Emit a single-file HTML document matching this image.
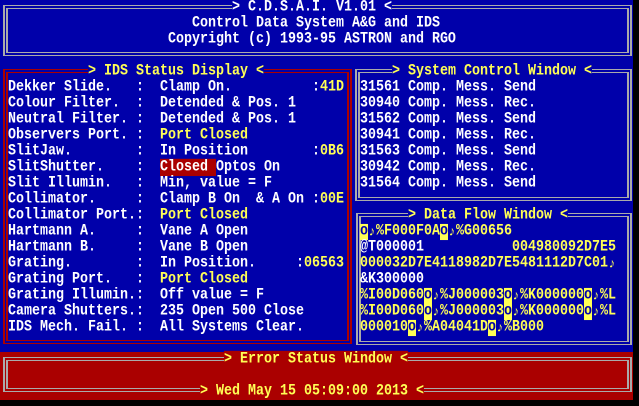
<!DOCTYPE html>
<html><head><meta charset="utf-8"><style>
html,body{margin:0;padding:0;background:#000;width:639px;height:406px;overflow:hidden}
#blue{position:absolute;left:0;top:0;width:633px;height:352px;background:#0000aa}
#red{position:absolute;left:0;top:352px;width:633px;height:48px;background:#aa0000}
#blk{position:absolute;left:0;top:400px;width:639px;height:6px;background:#000;z-index:5}
.box{position:absolute;box-sizing:border-box;border-style:double;border-width:4px 5px;border-color:#aaaaaa}
.r{position:absolute;height:16px;line-height:16px;white-space:pre;font-family:"Liberation Mono","DejaVu Sans Mono",monospace;font-weight:bold;font-size:13.33px;color:#fff;transform:scaleY(1.15);transform-origin:0 50%}
.y{color:#ffff55}
.bb{background:#0000aa}
.rb{background:#aa0000}
.cr{background:#aa0000;color:#fff}
.lf{background:#ffff55;color:#0000aa;display:inline-block;width:8px;height:14px;margin-top:1px;line-height:14px;text-align:center;vertical-align:top}
.n{display:inline-block;width:8px;height:16px;line-height:16px;overflow:hidden;text-align:center;vertical-align:top;font-size:12px}
</style></head><body>
<div id="blue"></div><div id="red"></div><div id="blk"></div>
<div class="box" style="left:3px;top:5px;width:629px;height:51px"></div>
<div class="box" style="left:3px;top:69px;width:349px;height:275px;border-color:#aa0000"></div>
<div class="box" style="left:355px;top:69px;width:277px;height:132px"></div>
<div class="box" style="left:356px;top:213px;width:276px;height:132px"></div>
<div class="box" style="left:3px;top:357px;width:629px;height:35px"></div>

<div class="r bb" style="top:0;left:232px">&gt; C.D.S.A.I. V1.01 &lt;</div>
<div class="r" style="top:16px;left:192px">Control Data System A&amp;G and IDS</div>
<div class="r" style="top:32px;left:168px">Copyright (c) 1993-95 ASTRON and RGO</div>
<div class="r bb y" style="top:64px;left:88px">&gt; IDS Status Display &lt;</div>
<div class="r bb y" style="top:64px;left:392px">&gt; System Control Window &lt;</div>

<div class="r" style="top:80px;left:8px">Dekker Slide.</div>
<div class="r" style="top:96px;left:8px">Colour Filter.</div>
<div class="r" style="top:112px;left:8px">Neutral Filter.</div>
<div class="r" style="top:128px;left:8px">Observers Port.</div>
<div class="r" style="top:144px;left:8px">SlitJaw.</div>
<div class="r" style="top:160px;left:8px">SlitShutter.</div>
<div class="r" style="top:176px;left:8px">Slit Illumin.</div>
<div class="r" style="top:192px;left:8px">Collimator.</div>
<div class="r" style="top:208px;left:8px">Collimator Port.</div>
<div class="r" style="top:224px;left:8px">Hartmann A.</div>
<div class="r" style="top:240px;left:8px">Hartmann B.</div>
<div class="r" style="top:256px;left:8px">Grating.</div>
<div class="r" style="top:272px;left:8px">Grating Port.</div>
<div class="r" style="top:288px;left:8px">Grating Illumin.</div>
<div class="r" style="top:304px;left:8px">Camera Shutters.</div>
<div class="r" style="top:320px;left:8px">IDS Mech. Fail.</div>

<div class="r" style="top:80px;left:136px">:  Clamp On.</div>
<div class="r" style="top:96px;left:136px">:  Detended &amp; Pos. 1</div>
<div class="r" style="top:112px;left:136px">:  Detended &amp; Pos. 1</div>
<div class="r" style="top:128px;left:136px">:  <span class="y">Port Closed</span></div>
<div class="r" style="top:144px;left:136px">:  In Position</div>
<div class="r" style="top:160px;left:136px">:  <span class="cr">Closed </span>Optos On</div>
<div class="r" style="top:176px;left:136px">:  Min, value = F</div>
<div class="r" style="top:192px;left:136px">:  Clamp B On  &amp; A On</div>
<div class="r" style="top:208px;left:136px">:  <span class="y">Port Closed</span></div>
<div class="r" style="top:224px;left:136px">:  Vane A Open</div>
<div class="r" style="top:240px;left:136px">:  Vane B Open</div>
<div class="r" style="top:256px;left:136px">:  In Position.</div>
<div class="r" style="top:272px;left:136px">:  <span class="y">Port Closed</span></div>
<div class="r" style="top:288px;left:136px">:  Off value = F</div>
<div class="r" style="top:304px;left:136px">:  235 Open 500 Close</div>
<div class="r" style="top:320px;left:136px">:  All Systems Clear.</div>

<div class="r" style="top:80px;left:312px">:<span class="y">41D</span></div>
<div class="r" style="top:144px;left:312px">:<span class="y">0B6</span></div>
<div class="r" style="top:192px;left:312px">:<span class="y">00E</span></div>
<div class="r" style="top:256px;left:296px">:<span class="y">06563</span></div>

<div class="r" style="top:80px;left:360px">31561 Comp. Mess. Send</div>
<div class="r" style="top:96px;left:360px">30940 Comp. Mess. Rec.</div>
<div class="r" style="top:112px;left:360px">31562 Comp. Mess. Send</div>
<div class="r" style="top:128px;left:360px">30941 Comp. Mess. Rec.</div>
<div class="r" style="top:144px;left:360px">31563 Comp. Mess. Send</div>
<div class="r" style="top:160px;left:360px">30942 Comp. Mess. Rec.</div>
<div class="r" style="top:176px;left:360px">31564 Comp. Mess. Send</div>

<div class="r bb y" style="top:208px;left:408px">&gt; Data Flow Window &lt;</div>
<div class="r y" style="top:224px;left:360px"><span class="lf">o</span><span class="n">♪</span>%F000F0A<span class="lf">o</span><span class="n">♪</span>%G00656</div>
<div class="r" style="top:240px;left:360px">@T000001</div>
<div class="r y" style="top:240px;left:512px">004980092D7E5</div>
<div class="r y" style="top:256px;left:360px">000032D7E4118982D7E5481112D7C01<span class="n">♪</span></div>
<div class="r" style="top:272px;left:360px">&amp;K300000</div>
<div class="r y" style="top:288px;left:360px">%I00D060<span class="lf">o</span><span class="n">♪</span>%J000003<span class="lf">o</span><span class="n">♪</span>%K000000<span class="lf">o</span><span class="n">♪</span>%L</div>
<div class="r y" style="top:304px;left:360px">%I00D060<span class="lf">o</span><span class="n">♪</span>%J000003<span class="lf">o</span><span class="n">♪</span>%K000000<span class="lf">o</span><span class="n">♪</span>%L</div>
<div class="r y" style="top:320px;left:360px">000010<span class="lf">o</span><span class="n">♪</span>%A04041D<span class="lf">o</span><span class="n">♪</span>%B000</div>

<div class="r rb y" style="top:352px;left:224px">&gt; Error Status Window &lt;</div>
<div class="r rb y" style="top:384px;left:200px">&gt; Wed May 15 05:09:00 2013 &lt;</div>
</body></html>
